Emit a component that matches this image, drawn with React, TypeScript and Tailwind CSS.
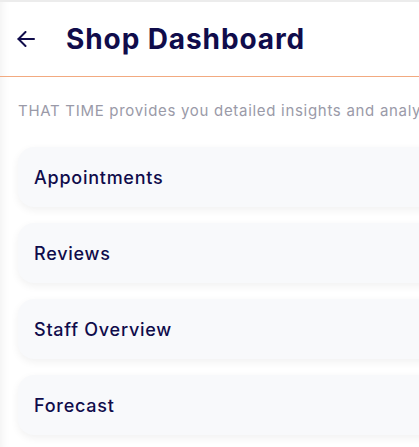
const sections = ['Appointments', 'Reviews', 'Staff Overview', 'Forecast'];

export default function App() {
    return (
        <div className="min-h-[447px] w-[419px] overflow-hidden bg-white border-t-2 border-[#ececec] shadow-[inset_10px_0_10px_-8px_rgba(0,0,0,0.06)] font-['Inter',sans-serif]">
            <header className="h-[75px] flex items-center border-b border-[#f2aa80] pl-[17px]">
                <button className="w-[18px] h-[16px] flex items-center justify-center text-[#100c4b]" aria-label="Back">
                    <svg width="18" height="16" viewBox="0 0 18 16" fill="none" stroke="currentColor" strokeWidth="2" strokeLinecap="round" strokeLinejoin="round">
                        <path d="M17 8H1.5" />
                        <path d="M8.5 1L1.5 8L8.5 15" />
                    </svg>
                </button>
                <h1 className="ml-[31px] text-[28px] font-bold text-[#100c4b] whitespace-nowrap tracking-[0.9px]">Shop Dashboard</h1>
            </header>

            <div className="pl-[18px] w-[640px]">
                <p className="mt-[23px] text-[15px] text-[#9a9aa8] whitespace-nowrap tracking-[0.7px]">
                    THAT TIME provides you detailed insights and analytics for your shop
                </p>
                <ul className="mt-[24px] flex flex-col gap-4">
                    {sections.map((s) => (
                        <li key={s} className="h-[60px] rounded-2xl bg-[#f8f9fb] shadow-[0_3px_8px_rgba(0,0,0,0.06)] flex items-center pl-4 pt-[2px]">
                            <span className="text-[18px] font-medium text-[#100c4b] tracking-[0.75px]">{s}</span>
                        </li>
                    ))}
                </ul>
            </div>
        </div>
    );
}
